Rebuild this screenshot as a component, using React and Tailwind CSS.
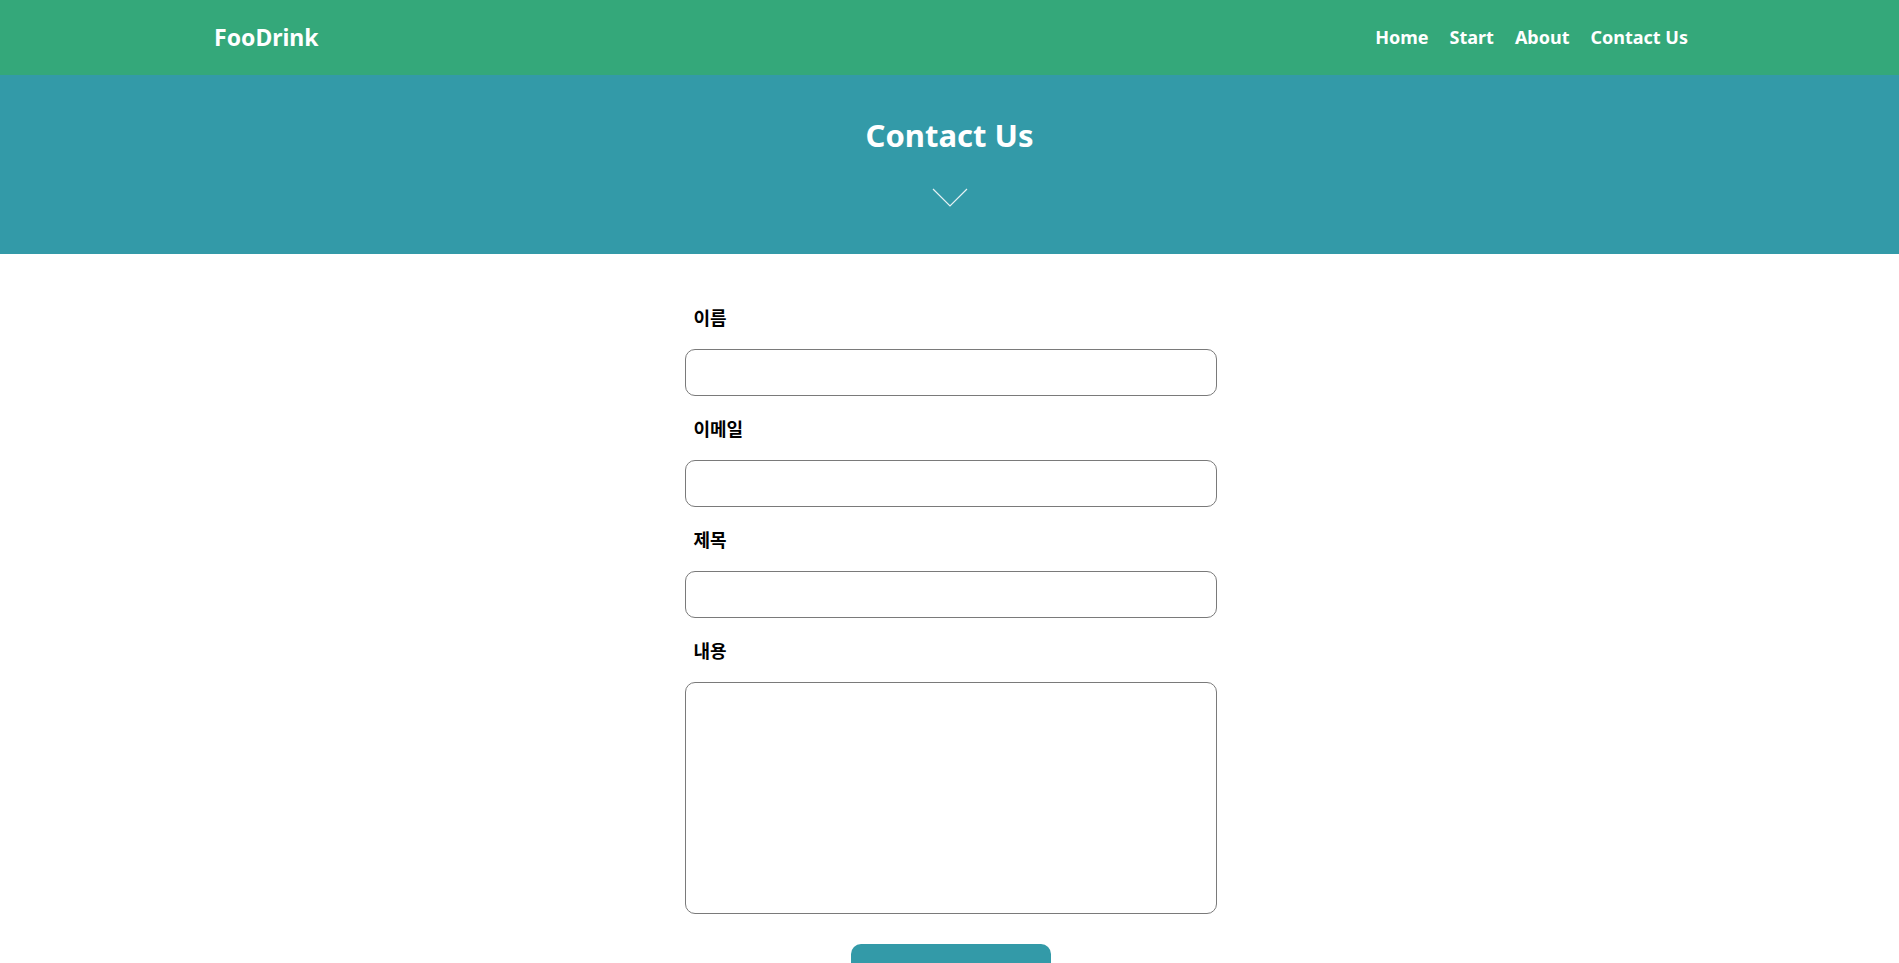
export default function App() {
  const fields = [
    { label: "이름", type: "text" },
    { label: "이메일", type: "email" },
    { label: "제목", type: "text" },
  ];
  return (
    <div className="min-h-screen bg-white font-['Noto_Sans','Noto_Sans_CJK_KR',sans-serif]">
      <header className="h-[75px] bg-[#34a87a] flex items-center justify-between pl-[214px] pr-[211px]">
        <div className="text-white font-bold text-[23px] leading-none -mt-[1px]">FooDrink</div>
        <nav className="flex items-center gap-[21px] text-white font-bold text-[18px] leading-none -mt-[2px]">
          <a>Home</a>
          <a>Start</a>
          <a>About</a>
          <a>Contact Us</a>
        </nav>
      </header>
      <section className="h-[179px] bg-[#339aa8] flex flex-col items-center pt-[36px]">
        <h1 className="text-white font-bold text-[31px] leading-[48px]">Contact Us</h1>
        <svg className="mt-[29px]" width="36" height="19" viewBox="0 0 36 19" fill="none">
          <polyline points="1,1 18,18 35,1" stroke="#e6f2f4" strokeWidth="1.2" />
        </svg>
      </section>
      <form className="w-[534px] pl-[2px] mx-auto pt-[51px] flex flex-col" onSubmit={(e) => e.preventDefault()}>
        {fields.map((f) => (
          <div key={f.label} className="flex flex-col mb-[20px]">
            <label className="pl-[9px] text-[18px] leading-[24px] font-bold text-black font-['Noto_Sans_CJK_KR',sans-serif] mb-[20px]">
              {f.label}
            </label>
            <input
              type={f.type}
              aria-label={f.label}
              className="h-[47px] w-full border border-[#7a7a7a] rounded-[10px] px-3 outline-none"
            />
          </div>
        ))}
        <div className="flex flex-col">
          <label className="pl-[9px] text-[18px] leading-[24px] font-bold text-black font-['Noto_Sans_CJK_KR',sans-serif] mb-[20px]">
            내용
          </label>
          <textarea aria-label="내용" className="h-[232px] w-full border border-[#7a7a7a] rounded-[10px] px-3 py-2 outline-none resize-none" />
        </div>
        <div className="flex justify-center mt-[30px] mb-10">
          <button
            type="submit"
            aria-label="보내기"
            className="w-[200px] h-[64px] rounded-[10px] bg-[#339aa8]"
          />
        </div>
      </form>
    </div>
  );
}
